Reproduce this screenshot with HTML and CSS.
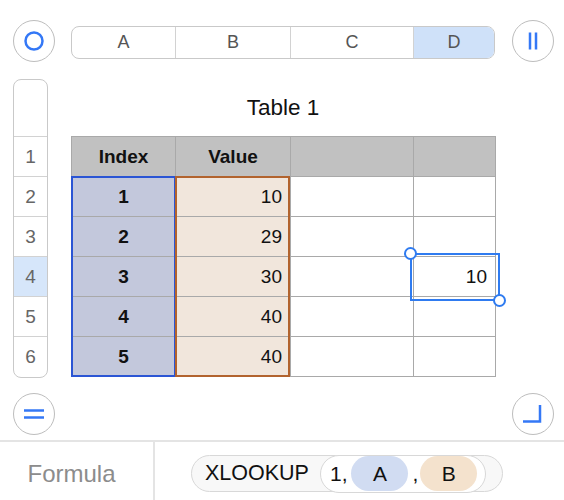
FILE: index.html
```html
<!DOCTYPE html>
<html>
<head>
<meta charset="utf-8">
<link rel="stylesheet" href="styles.css">
</head>
<body>
<div class="app">
  <div class="top">
    <div class="btn">
      <svg width="22" height="22" viewBox="0 0 22 22"><circle cx="11" cy="11" r="8.5" fill="none" stroke="#3478f6" stroke-width="2.5"/></svg>
    </div>
    <div class="colbar">
      <div class="col c1">A</div>
      <div class="col c2">B</div>
      <div class="col c3">C</div>
      <div class="col c4 sel">D</div>
    </div>
    <div class="btn btn-right">
      <svg width="20" height="20" viewBox="0 0 20 20"><path d="M7 1.5V18.5M13 1.5V18.5" stroke="#3478f6" stroke-width="2.5" fill="none"/></svg>
    </div>
  </div>

  <div class="middle">
    <div class="rowhdr">
      <div class="corner"></div>
      <div class="rn">1</div>
      <div class="rn">2</div>
      <div class="rn">3</div>
      <div class="rn sel">4</div>
      <div class="rn">5</div>
      <div class="rn last">6</div>
    </div>
    <div class="tablewrap">
      <div class="title">Table 1</div>
      <table class="sheet">
        <colgroup><col class="w1"><col class="w2"><col class="w3"><col class="w4"></colgroup>
        <tr class="hdr"><th>Index</th><th>Value</th><th></th><th></th></tr>
        <tr><td class="idx">1</td><td class="val">10</td><td></td><td></td></tr>
        <tr><td class="idx">2</td><td class="val">29</td><td></td><td></td></tr>
        <tr><td class="idx">3</td><td class="val">30</td><td></td><td class="num">10</td></tr>
        <tr><td class="idx">4</td><td class="val">40</td><td></td><td></td></tr>
        <tr><td class="idx">5</td><td class="val">40</td><td></td><td></td></tr>
      </table>
      <div class="range range-a"></div>
      <div class="range range-b"></div>
      <div class="selbox"></div>
      <div class="handle h1"></div>
      <div class="handle h2"></div>
    </div>
  </div>

  <div class="bottom">
    <div class="btn">
      <svg width="22" height="22" viewBox="0 0 22 22"><path d="M1 7.5H21M1 14.5H21" stroke="#3478f6" stroke-width="2.5" fill="none"/></svg>
    </div>
    <div class="btn">
      <svg width="22" height="22" viewBox="0 0 22 22"><path d="M18 2V18.5H1" stroke="#3478f6" stroke-width="2.5" fill="none"/></svg>
    </div>
  </div>

  <div class="footer">
    <div class="label">Formula</div>
    <div class="formula">
      <div class="pill">
        <span class="fn">XLOOKUP</span>
        <div class="args">
          <span class="arg">1,</span>
          <span class="tok tok-a">A</span>
          <span class="arg comma">,</span>
          <span class="tok tok-b">B</span>
        </div>
      </div>
    </div>
  </div>
</div>
</body>
</html>
```

FILE: styles.css
```css
* { box-sizing: border-box; }
html, body { margin: 0; padding: 0; background: #fff; }
body { font-family: "Liberation Sans", Arial, sans-serif; color: #111; }

.app { width: 564px; height: 500px; overflow: hidden; display: flex; flex-direction: column; }

.top { display: flex; align-items: flex-start; padding: 20px 0 0 13px; height: 62px; }

.btn {
  width: 42px; height: 42px; border-radius: 50%;
  border: 1.5px solid #bdbdbd; background: #fff;
  display: flex; align-items: center; justify-content: center;
  flex: none;
}
.btn-right { margin-left: 17px; }

.colbar {
  margin: 6px 0 0 16px; width: 424px; height: 33px;
  display: flex; border: 1px solid #c9c9c9; border-radius: 8px; overflow: hidden;
}
.col {
  display: flex; align-items: center; justify-content: center;
  font-size: 18px; color: #555; border-right: 1px solid #d2d2d2;
}
.c1 { width: 104px; }
.c2 { width: 115px; }
.c3 { width: 123px; }
.c4 { flex: 1; border-right: none; }
.col.sel { background: #cfe1f9; }

.middle { display: flex; margin-top: 17px; padding-left: 13px; }

.rowhdr {
  width: 35px; border: 1px solid #c9c9c9; border-radius: 8px; overflow: hidden;
  display: flex; flex-direction: column;
}
.corner { height: 57px; border-bottom: 1px solid #d2d2d2; }
.rn {
  height: 40px; border-bottom: 1px solid #d2d2d2;
  display: flex; align-items: center; justify-content: center;
  font-size: 19px; color: #666;
}
.rn.last { border-bottom: none; }
.rn.sel { background: #d6e6fa; }

.tablewrap { position: relative; margin-left: 23px; width: 424px; }
.title { height: 57px; line-height: 57px; text-align: center; font-size: 22.5px; color: #111; }

.sheet { border-collapse: collapse; table-layout: fixed; width: 424px; }
.w1 { width: 104px; }
.w2 { width: 115px; }
.w3 { width: 123px; }
.w4 { width: 82px; }
.sheet th, .sheet td { height: 40px; border: 1px solid #a9a9a9; padding: 0 8px; font-size: 19px; }
.sheet .hdr th { background: #c1c1c1; font-weight: bold; text-align: center; }
.sheet td.idx { background: #c3c8dc; font-weight: bold; text-align: center; }
.sheet td.val { background: #f1e6dc; text-align: right; }
.sheet td.num { text-align: right; }

.range { position: absolute; top: 97px; height: 201px; border: 2px solid; }
.range-a { left: 0; width: 105px; border-color: #2b55d4; }
.range-b { left: 104px; width: 115px; border-color: #b2632e; }

.selbox { position: absolute; left: 339px; top: 174px; width: 90px; height: 48px; border: 2px solid #2f7bf0; }
.handle {
  position: absolute; width: 13px; height: 13px; border-radius: 50%;
  background: #fff; border: 2px solid #2f7bf0;
}
.h1 { left: 332.5px; top: 167.5px; }
.h2 { left: 421.5px; top: 214.5px; }

.bottom { display: flex; justify-content: space-between; margin-top: 15px; padding: 0 10px 0 13px; }

.footer { margin-top: 5px; border-top: 2px solid #e4e4e4; height: 60px; display: flex; }
.label {
  width: 155px; border-right: 2px solid #e4e4e4;
  display: flex; align-items: center; justify-content: center;
  font-size: 24px; color: #8c8c8c; padding-top: 6px; padding-right: 10px;
}
.formula { flex: 1; display: flex; align-items: center; padding-left: 36px; padding-top: 5px; }
.pill {
  height: 37px; border: 1.5px solid #d8d8d8; border-radius: 19px; background: #f8f8f8;
  display: flex; align-items: center; padding-left: 13px; padding-right: 16px;
}
.fn { font-size: 21.5px; color: #111; }
.args {
  align-self: stretch; margin: -1.5px 0 -1.5px 11px;
  border: 1.5px solid #d8d8d8; border-radius: 19px; background: #fff;
  display: flex; align-items: center; padding: 0 8px 0 9px;
}
.arg { font-size: 21px; color: #111; }
.comma { margin-left: 4px; }
.tok {
  height: 35px; width: 57px; border-radius: 18px;
  display: flex; align-items: center; justify-content: center;
  font-size: 21px; color: #111; margin-left: 4px;
}
.tok-a { background: #d1dcf2; }
.tok-b { background: #f4e2cd; margin-left: 2px; }
```
